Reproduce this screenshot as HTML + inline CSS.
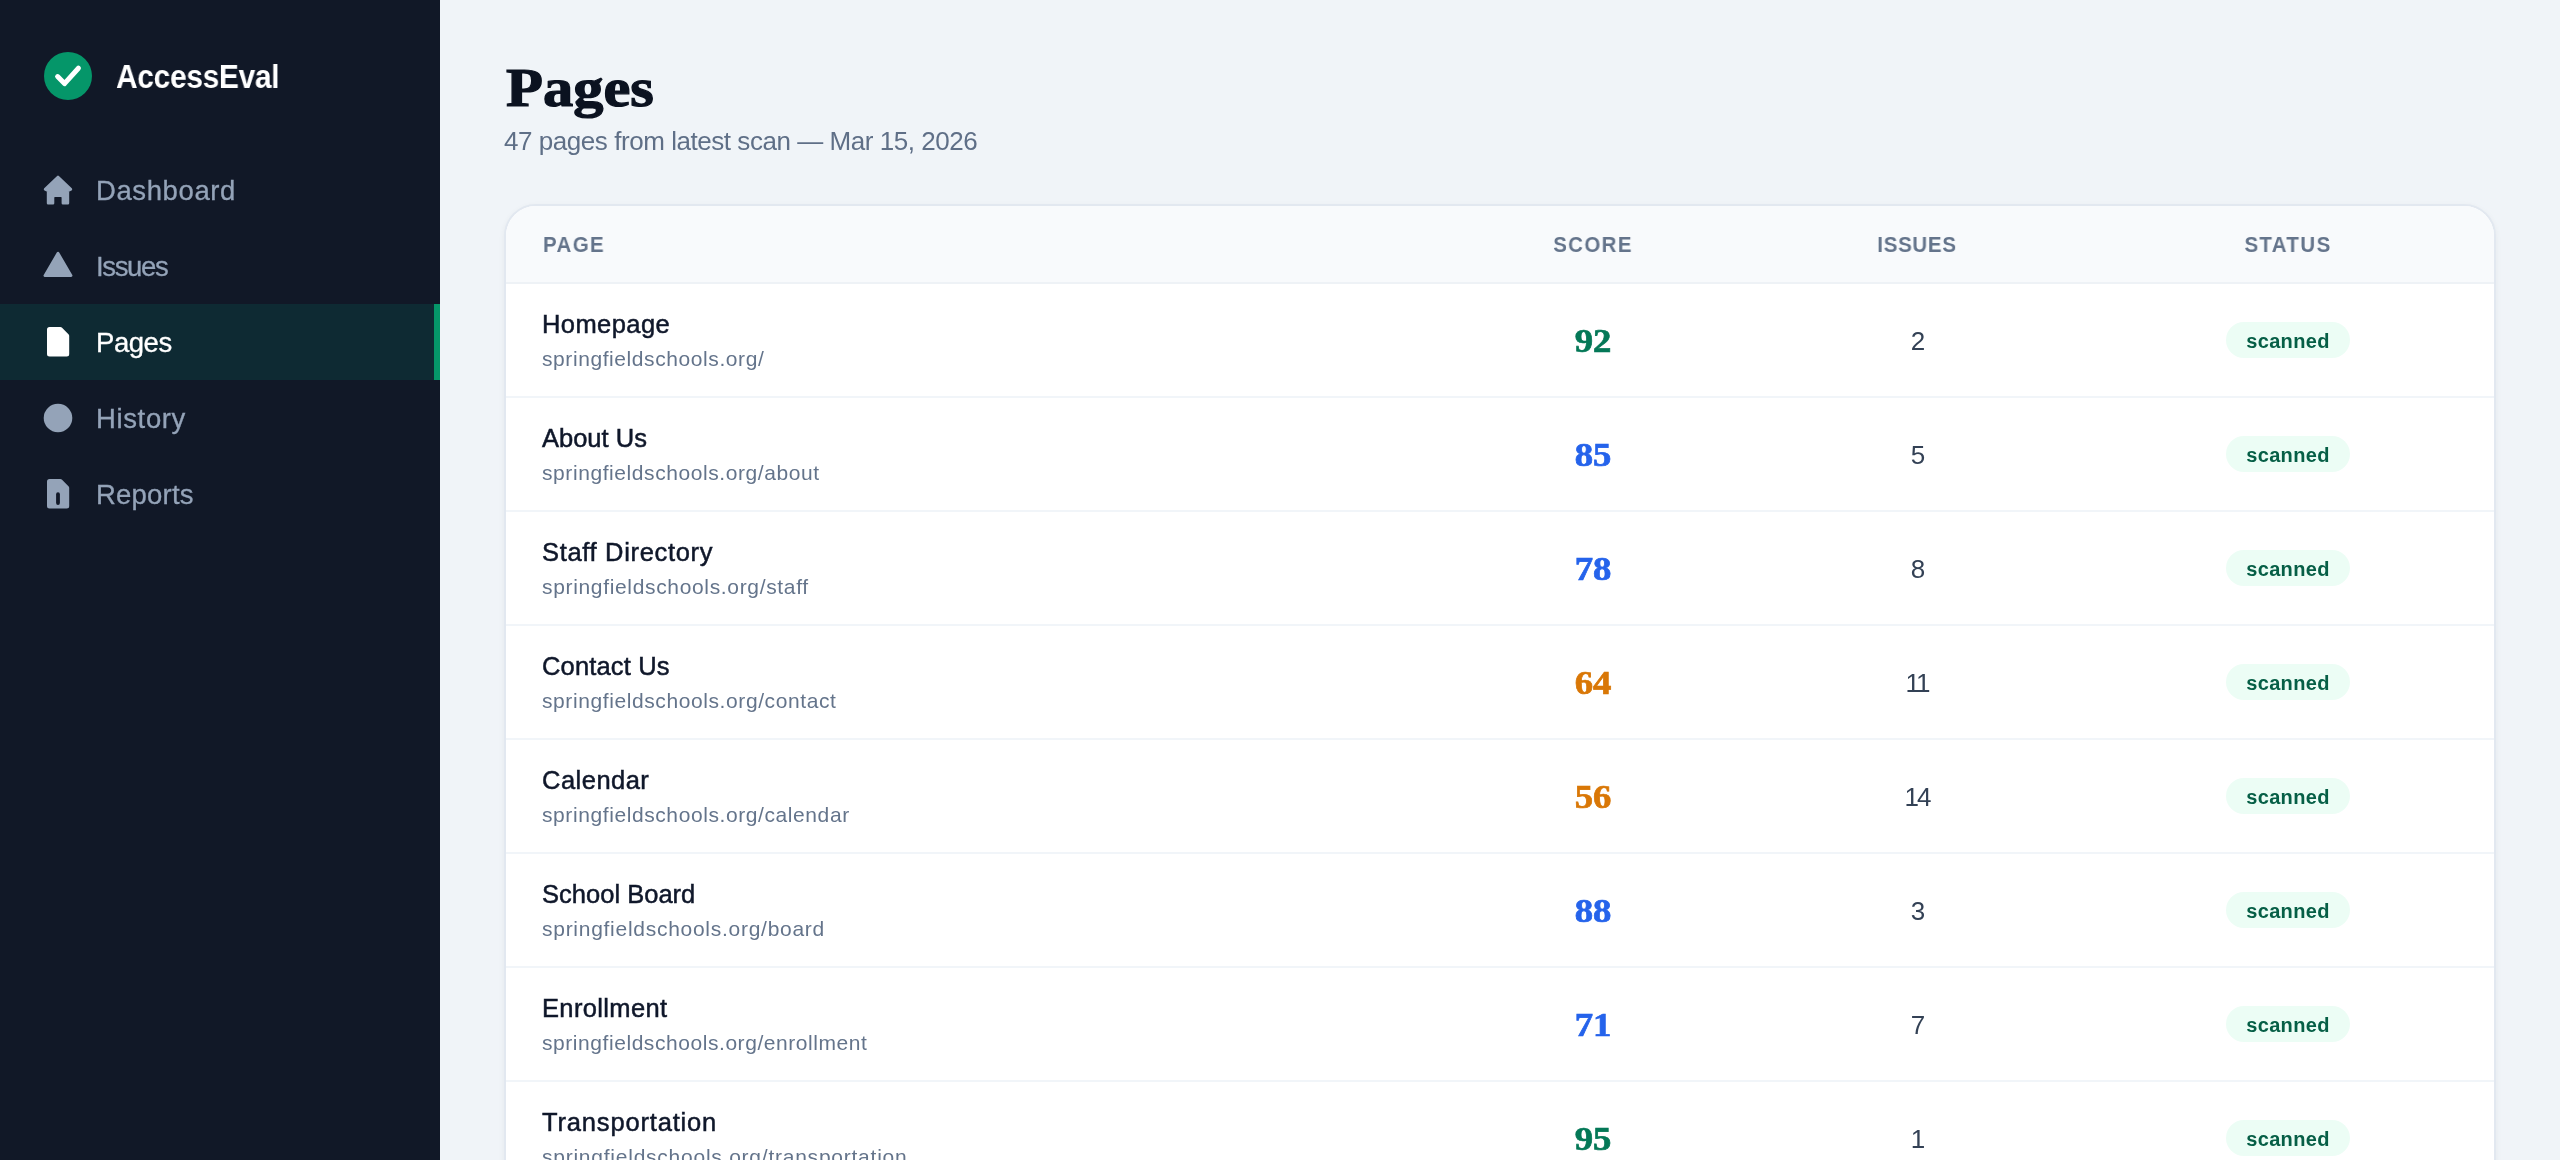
<!DOCTYPE html>
<html><head><meta charset="utf-8"><title>Pages - AccessEval</title>
<style>
html,body{margin:0;padding:0;}
body{width:2560px;height:1160px;overflow:hidden;position:relative;background:#f0f4f8;font-family:"Liberation Sans",sans-serif;}
.t{position:absolute;white-space:nowrap;will-change:transform;}
#side{position:absolute;left:0;top:0;width:440px;height:1160px;background:#111827;}
.nav-active{position:absolute;left:0;top:304px;width:440px;height:76px;background:#0e2a33;}
.nav-bar{position:absolute;left:434px;top:304px;width:6px;height:76px;background:#059669;}
.ico{position:absolute;left:36px;width:50px;height:50px;}
#card{position:absolute;left:504px;top:204px;width:1988px;height:1000px;border:2px solid #e2e8f0;border-radius:32px;background:#fff;overflow:hidden;box-shadow:0 2px 6px rgba(15,23,42,0.05);}
#thead{position:absolute;left:0;top:0;width:1988px;height:76px;background:#f8fafc;border-bottom:2px solid #eef2f6;}
.row{position:absolute;left:0;width:1988px;height:112px;border-bottom:2px solid #f1f5f9;}
.badge{position:absolute;width:124px;height:36px;border-radius:18px;background:#ecfdf5;}
</style></head><body>
<div id="side">
<svg style="position:absolute;left:44px;top:52px" width="48" height="48" viewBox="0 0 48 48"><circle cx="24" cy="24" r="24" fill="#059669"/><polyline points="13.6,24.6 20.5,31.6 34.4,16.2" fill="none" stroke="#fff" stroke-width="5" stroke-linecap="round" stroke-linejoin="round"/></svg>
<div class="t" style="left:115.8px;top:60.00px;font-size:33px;line-height:33px;font-family:'Liberation Sans', sans-serif;font-weight:700;color:#fff;letter-spacing:-0.3px;transform:scaleX(0.905);transform-origin:0 0;">AccessEval</div>
<div class="nav-active"></div><div class="nav-bar"></div>
<svg class="ico" style="top:166px" viewBox="0 0 50 50"><path d="M22 10.9 L34.9 23.3 L31.9 24.9 L31.9 37.3 L26.9 37.3 L26.9 31.6 Q26.9 29.7 25 29.7 L18.9 29.7 Q17 29.7 17 31.6 L17 37.3 L12.1 37.3 L12.1 24.9 L9.1 23.3 Z" fill="#94a3b8" stroke="#94a3b8" stroke-width="2.6" stroke-linejoin="round"/></svg>
<div class="t" style="left:96px;top:176.75px;font-size:27.5px;line-height:27.5px;font-family:'Liberation Sans', sans-serif;font-weight:400;color:#94a3b8;letter-spacing:0.6px;-webkit-text-stroke:0.3px #94a3b8;">Dashboard</div>
<svg class="ico" style="top:242px" viewBox="0 0 50 50"><polygon points="22,11.2 8.9,33.6 35.1,33.6" fill="#94a3b8" stroke="#94a3b8" stroke-width="2.8" stroke-linejoin="round"/></svg>
<div class="t" style="left:96px;top:252.75px;font-size:27.5px;line-height:27.5px;font-family:'Liberation Sans', sans-serif;font-weight:400;color:#94a3b8;letter-spacing:-1.34px;-webkit-text-stroke:0.3px #94a3b8;">Issues</div>
<svg class="ico" style="top:318px" viewBox="0 0 50 50"><polygon points="13.5,11.5 24.3,11.5 30.7,17.9 30.7,36.1 13.5,36.1" fill="#fff" stroke="#fff" stroke-width="5" stroke-linejoin="round"/></svg>
<div class="t" style="left:96px;top:328.75px;font-size:27.5px;line-height:27.5px;font-family:'Liberation Sans', sans-serif;font-weight:400;color:#fff;letter-spacing:-0.45px;-webkit-text-stroke:0.3px #fff;">Pages</div>
<svg class="ico" style="top:394px" viewBox="0 0 50 50"><circle cx="22" cy="24" r="14.3" fill="#94a3b8"/></svg>
<div class="t" style="left:96px;top:404.75px;font-size:27.5px;line-height:27.5px;font-family:'Liberation Sans', sans-serif;font-weight:400;color:#94a3b8;letter-spacing:0.634px;-webkit-text-stroke:0.3px #94a3b8;">History</div>
<svg class="ico" style="top:470px" viewBox="0 0 50 50"><polygon points="13.5,11.5 24.3,11.5 30.7,17.9 30.7,36.1 13.5,36.1" fill="#94a3b8" stroke="#94a3b8" stroke-width="5" stroke-linejoin="round"/><line x1="22" y1="24.2" x2="22" y2="33" stroke="#111827" stroke-width="3.8" stroke-linecap="round"/></svg>
<div class="t" style="left:96px;top:480.75px;font-size:27.5px;line-height:27.5px;font-family:'Liberation Sans', sans-serif;font-weight:400;color:#94a3b8;letter-spacing:0.2px;-webkit-text-stroke:0.3px #94a3b8;">Reports</div>
</div>
<div class="t" style="left:505.5px;top:61.00px;font-size:54px;line-height:54px;font-family:'Liberation Serif', serif;font-weight:700;color:#0b1220;transform:scaleX(1.12);transform-origin:0 0;-webkit-text-stroke:1.2px #0b1220;">Pages</div>
<div class="t" style="left:504px;top:128.00px;font-size:26px;line-height:26px;font-family:'Liberation Sans', sans-serif;font-weight:400;color:#5f6f87;letter-spacing:-0.45px;">47 pages from latest scan — Mar 15, 2026</div>
<div id="card">
<div id="thead"></div>
<div class="t" style="left:37px;top:27.50px;font-size:22px;line-height:22px;font-family:'Liberation Sans', sans-serif;font-weight:700;color:#64748b;letter-spacing:1.5px;transform:scaleX(0.93);transform-origin:0 0;">PAGE</div>
<div class="t" style="left:936.75px;width:300px;text-align:center;top:27.50px;font-size:22px;line-height:22px;font-family:'Liberation Sans', sans-serif;font-weight:700;color:#64748b;letter-spacing:1.5px;transform:scaleX(0.93);">SCORE</div>
<div class="t" style="left:1261.4px;width:300px;text-align:center;top:27.50px;font-size:22px;line-height:22px;font-family:'Liberation Sans', sans-serif;font-weight:700;color:#64748b;letter-spacing:0.8px;transform:scaleX(0.93);">ISSUES</div>
<div class="t" style="left:1631.75px;width:300px;text-align:center;top:27.50px;font-size:22px;line-height:22px;font-family:'Liberation Sans', sans-serif;font-weight:700;color:#64748b;letter-spacing:1.5px;transform:scaleX(0.93);">STATUS</div>
<div class="row" style="top:78px"></div>
<div class="t" style="left:36px;top:106.25px;font-size:25.5px;line-height:25.5px;font-family:'Liberation Sans', sans-serif;font-weight:400;color:#0f172a;letter-spacing:0.428px;-webkit-text-stroke:0.5px #0f172a;">Homepage</div>
<div class="t" style="left:36px;top:142.00px;font-size:21px;line-height:21px;font-family:'Liberation Sans', sans-serif;font-weight:400;color:#64748b;letter-spacing:0.582px;">springfieldschools.org/</div>
<div class="t" style="left:987.0px;width:200px;text-align:center;top:117.50px;font-size:34px;line-height:34px;font-family:'Liberation Serif', serif;font-weight:700;color:#047857;transform:scaleX(1.08);-webkit-text-stroke:0.7px #047857;">92</div>
<div class="t" style="left:1312.0px;width:200px;text-align:center;top:122.00px;font-size:26px;line-height:26px;font-family:'Liberation Sans', sans-serif;font-weight:400;color:#334155;">2</div>
<div class="badge" style="left:1720px;top:116px"></div>
<div class="t" style="left:1681.8px;width:200px;text-align:center;top:125.00px;font-size:20px;line-height:20px;font-family:'Liberation Sans', sans-serif;font-weight:700;color:#065f46;letter-spacing:0.35px;">scanned</div>
<div class="row" style="top:192px"></div>
<div class="t" style="left:36px;top:220.25px;font-size:25.5px;line-height:25.5px;font-family:'Liberation Sans', sans-serif;font-weight:400;color:#0f172a;-webkit-text-stroke:0.5px #0f172a;">About Us</div>
<div class="t" style="left:36px;top:256.00px;font-size:21px;line-height:21px;font-family:'Liberation Sans', sans-serif;font-weight:400;color:#64748b;letter-spacing:0.578px;">springfieldschools.org/about</div>
<div class="t" style="left:987.0px;width:200px;text-align:center;top:231.50px;font-size:34px;line-height:34px;font-family:'Liberation Serif', serif;font-weight:700;color:#2563eb;transform:scaleX(1.08);-webkit-text-stroke:0.7px #2563eb;">85</div>
<div class="t" style="left:1312.0px;width:200px;text-align:center;top:236.00px;font-size:26px;line-height:26px;font-family:'Liberation Sans', sans-serif;font-weight:400;color:#334155;">5</div>
<div class="badge" style="left:1720px;top:230px"></div>
<div class="t" style="left:1681.8px;width:200px;text-align:center;top:239.00px;font-size:20px;line-height:20px;font-family:'Liberation Sans', sans-serif;font-weight:700;color:#065f46;letter-spacing:0.35px;">scanned</div>
<div class="row" style="top:306px"></div>
<div class="t" style="left:36px;top:334.25px;font-size:25.5px;line-height:25.5px;font-family:'Liberation Sans', sans-serif;font-weight:400;color:#0f172a;letter-spacing:0.67px;-webkit-text-stroke:0.5px #0f172a;">Staff Directory</div>
<div class="t" style="left:36px;top:370.00px;font-size:21px;line-height:21px;font-family:'Liberation Sans', sans-serif;font-weight:400;color:#64748b;letter-spacing:0.661px;">springfieldschools.org/staff</div>
<div class="t" style="left:987.0px;width:200px;text-align:center;top:345.50px;font-size:34px;line-height:34px;font-family:'Liberation Serif', serif;font-weight:700;color:#2563eb;transform:scaleX(1.08);-webkit-text-stroke:0.7px #2563eb;">78</div>
<div class="t" style="left:1312.0px;width:200px;text-align:center;top:350.00px;font-size:26px;line-height:26px;font-family:'Liberation Sans', sans-serif;font-weight:400;color:#334155;">8</div>
<div class="badge" style="left:1720px;top:344px"></div>
<div class="t" style="left:1681.8px;width:200px;text-align:center;top:353.00px;font-size:20px;line-height:20px;font-family:'Liberation Sans', sans-serif;font-weight:700;color:#065f46;letter-spacing:0.35px;">scanned</div>
<div class="row" style="top:420px"></div>
<div class="t" style="left:36px;top:448.25px;font-size:25.5px;line-height:25.5px;font-family:'Liberation Sans', sans-serif;font-weight:400;color:#0f172a;letter-spacing:0.157px;-webkit-text-stroke:0.5px #0f172a;">Contact Us</div>
<div class="t" style="left:36px;top:484.00px;font-size:21px;line-height:21px;font-family:'Liberation Sans', sans-serif;font-weight:400;color:#64748b;letter-spacing:0.594px;">springfieldschools.org/contact</div>
<div class="t" style="left:987.0px;width:200px;text-align:center;top:459.50px;font-size:34px;line-height:34px;font-family:'Liberation Serif', serif;font-weight:700;color:#d97706;transform:scaleX(1.08);-webkit-text-stroke:0.7px #d97706;">64</div>
<div class="t" style="left:1311.0px;width:200px;text-align:center;top:464.00px;font-size:26px;line-height:26px;font-family:'Liberation Sans', sans-serif;font-weight:400;color:#334155;letter-spacing:-2px;">11</div>
<div class="badge" style="left:1720px;top:458px"></div>
<div class="t" style="left:1681.8px;width:200px;text-align:center;top:467.00px;font-size:20px;line-height:20px;font-family:'Liberation Sans', sans-serif;font-weight:700;color:#065f46;letter-spacing:0.35px;">scanned</div>
<div class="row" style="top:534px"></div>
<div class="t" style="left:36px;top:562.25px;font-size:25.5px;line-height:25.5px;font-family:'Liberation Sans', sans-serif;font-weight:400;color:#0f172a;letter-spacing:0.483px;-webkit-text-stroke:0.5px #0f172a;">Calendar</div>
<div class="t" style="left:36px;top:598.00px;font-size:21px;line-height:21px;font-family:'Liberation Sans', sans-serif;font-weight:400;color:#64748b;letter-spacing:0.588px;">springfieldschools.org/calendar</div>
<div class="t" style="left:987.0px;width:200px;text-align:center;top:573.50px;font-size:34px;line-height:34px;font-family:'Liberation Serif', serif;font-weight:700;color:#d97706;transform:scaleX(1.08);-webkit-text-stroke:0.7px #d97706;">56</div>
<div class="t" style="left:1311.0px;width:200px;text-align:center;top:578.00px;font-size:26px;line-height:26px;font-family:'Liberation Sans', sans-serif;font-weight:400;color:#334155;letter-spacing:-2px;">14</div>
<div class="badge" style="left:1720px;top:572px"></div>
<div class="t" style="left:1681.8px;width:200px;text-align:center;top:581.00px;font-size:20px;line-height:20px;font-family:'Liberation Sans', sans-serif;font-weight:700;color:#065f46;letter-spacing:0.35px;">scanned</div>
<div class="row" style="top:648px"></div>
<div class="t" style="left:36px;top:676.25px;font-size:25.5px;line-height:25.5px;font-family:'Liberation Sans', sans-serif;font-weight:400;color:#0f172a;letter-spacing:0.016px;-webkit-text-stroke:0.5px #0f172a;">School Board</div>
<div class="t" style="left:36px;top:712.00px;font-size:21px;line-height:21px;font-family:'Liberation Sans', sans-serif;font-weight:400;color:#64748b;letter-spacing:0.726px;">springfieldschools.org/board</div>
<div class="t" style="left:987.0px;width:200px;text-align:center;top:687.50px;font-size:34px;line-height:34px;font-family:'Liberation Serif', serif;font-weight:700;color:#2563eb;transform:scaleX(1.08);-webkit-text-stroke:0.7px #2563eb;">88</div>
<div class="t" style="left:1312.0px;width:200px;text-align:center;top:692.00px;font-size:26px;line-height:26px;font-family:'Liberation Sans', sans-serif;font-weight:400;color:#334155;">3</div>
<div class="badge" style="left:1720px;top:686px"></div>
<div class="t" style="left:1681.8px;width:200px;text-align:center;top:695.00px;font-size:20px;line-height:20px;font-family:'Liberation Sans', sans-serif;font-weight:700;color:#065f46;letter-spacing:0.35px;">scanned</div>
<div class="row" style="top:762px"></div>
<div class="t" style="left:36px;top:790.25px;font-size:25.5px;line-height:25.5px;font-family:'Liberation Sans', sans-serif;font-weight:400;color:#0f172a;letter-spacing:0.356px;-webkit-text-stroke:0.5px #0f172a;">Enrollment</div>
<div class="t" style="left:36px;top:826.00px;font-size:21px;line-height:21px;font-family:'Liberation Sans', sans-serif;font-weight:400;color:#64748b;letter-spacing:0.559px;">springfieldschools.org/enrollment</div>
<div class="t" style="left:987.0px;width:200px;text-align:center;top:801.50px;font-size:34px;line-height:34px;font-family:'Liberation Serif', serif;font-weight:700;color:#2563eb;transform:scaleX(1.08);-webkit-text-stroke:0.7px #2563eb;">71</div>
<div class="t" style="left:1312.0px;width:200px;text-align:center;top:806.00px;font-size:26px;line-height:26px;font-family:'Liberation Sans', sans-serif;font-weight:400;color:#334155;">7</div>
<div class="badge" style="left:1720px;top:800px"></div>
<div class="t" style="left:1681.8px;width:200px;text-align:center;top:809.00px;font-size:20px;line-height:20px;font-family:'Liberation Sans', sans-serif;font-weight:700;color:#065f46;letter-spacing:0.35px;">scanned</div>
<div class="row" style="top:876px"></div>
<div class="t" style="left:36px;top:904.25px;font-size:25.5px;line-height:25.5px;font-family:'Liberation Sans', sans-serif;font-weight:400;color:#0f172a;letter-spacing:0.83px;-webkit-text-stroke:0.5px #0f172a;">Transportation</div>
<div class="t" style="left:36px;top:940.00px;font-size:21px;line-height:21px;font-family:'Liberation Sans', sans-serif;font-weight:400;color:#64748b;letter-spacing:0.759px;">springfieldschools.org/transportation</div>
<div class="t" style="left:987.0px;width:200px;text-align:center;top:915.50px;font-size:34px;line-height:34px;font-family:'Liberation Serif', serif;font-weight:700;color:#047857;transform:scaleX(1.08);-webkit-text-stroke:0.7px #047857;">95</div>
<div class="t" style="left:1312.0px;width:200px;text-align:center;top:920.00px;font-size:26px;line-height:26px;font-family:'Liberation Sans', sans-serif;font-weight:400;color:#334155;">1</div>
<div class="badge" style="left:1720px;top:914px"></div>
<div class="t" style="left:1681.8px;width:200px;text-align:center;top:923.00px;font-size:20px;line-height:20px;font-family:'Liberation Sans', sans-serif;font-weight:700;color:#065f46;letter-spacing:0.35px;">scanned</div>
</div>
</body></html>
